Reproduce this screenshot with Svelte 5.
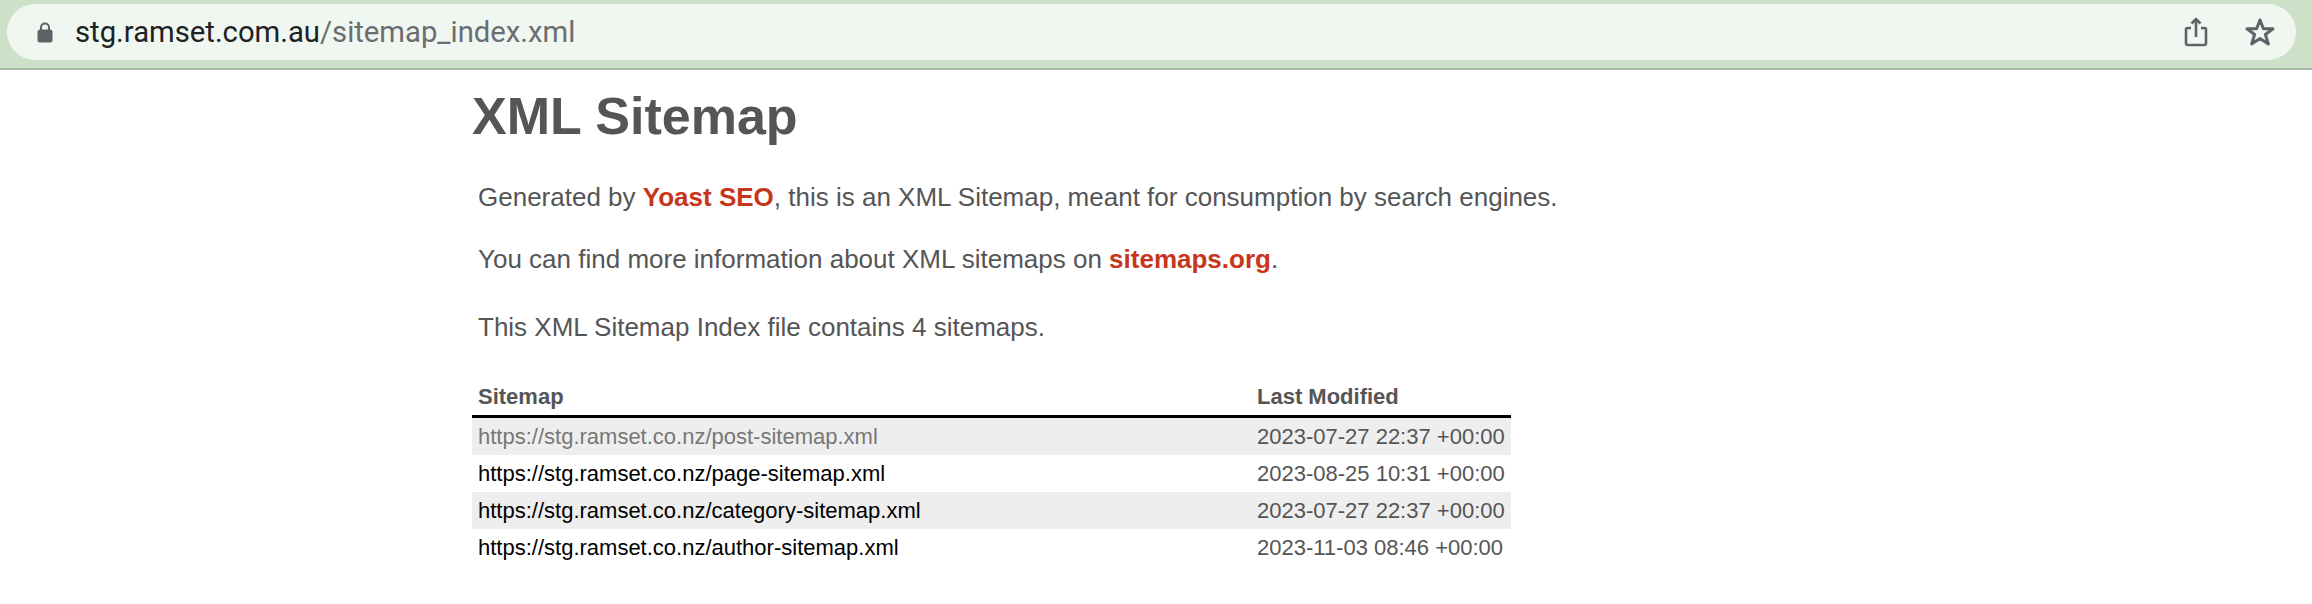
<script lang="ts">
  const rows = [
    { url: "https://stg.ramset.co.nz/post-sitemap.xml", date: "2023-07-27 22:37 +00:00", visited: true },
    { url: "https://stg.ramset.co.nz/page-sitemap.xml", date: "2023-08-25 10:31 +00:00", visited: false },
    { url: "https://stg.ramset.co.nz/category-sitemap.xml", date: "2023-07-27 22:37 +00:00", visited: false },
    { url: "https://stg.ramset.co.nz/author-sitemap.xml", date: "2023-11-03 08:46 +00:00", visited: false }
  ];
</script>

<div class="toolbar">
  <div class="pill">
    <svg class="lock" width="16" height="24" viewBox="0 0 16 24" aria-hidden="true">
      <path d="M4 10V7.5a4 4 0 0 1 8 0V10" fill="none" stroke="#5f6368" stroke-width="2" />
      <rect x="0.5" y="9.5" width="15" height="13" rx="2.5" fill="#5f6368" />
    </svg>
    <div class="url"><span class="host">stg.ramset.com.au</span>/sitemap_index.xml</div>
    <svg class="share" width="24" height="30" viewBox="0 0 24 30" aria-hidden="true">
      <path d="M7 11H3.5A1.5 1.5 0 0 0 2 12.500V26.500A1.500 1.500 0 0 0 3.500 28H20.500A1.500 1.500 0 0 0 22 26.500V12.500A1.500 1.500 0 0 0 20.500 11H17M12 20V2.500M7.500 6.500L12 2L16.500 6.500" fill="none" stroke="#5f6368" stroke-width="2.600" />
    </svg>
    <svg class="star" width="30" height="30" viewBox="0 0 30 30" aria-hidden="true">
      <path d="M15 3L18.400 11.700H28L20.400 17.500L23.300 27L15 21.500L6.700 27L9.600 17.500L2 11.700H11.600Z" fill="none" stroke="#5f6368" stroke-width="3" stroke-linejoin="round" />
    </svg>
  </div>
</div>

<main class="content">
  <h1>XML Sitemap</h1>
  <p class="intro">Generated by <a href="#yoast">Yoast SEO</a>, this is an XML Sitemap, meant for consumption by search engines.</p>
  <p class="intro more">You can find more information about XML sitemaps on <a href="#sitemaps">sitemaps.org</a>.</p>
  <p class="count">This XML Sitemap Index file contains 4 sitemaps.</p>
  <table>
    <thead>
      <tr><th class="col-url">Sitemap</th><th>Last Modified</th></tr>
    </thead>
    <tbody>
      {#each rows as row}
        <tr>
          <td class="col-url"><span class:visited={row.visited}>{row.url}</span></td>
          <td class="date">{row.date}</td>
        </tr>
      {/each}
    </tbody>
  </table>
</main>

<style>
  :global(body) {
    margin: 0;
    background: #fff;
  }
  .toolbar {
    height: 64px;
    background: #cde1c9;
    border-bottom: 2px solid #a9bda6;
    padding: 4px 7px 0;
    box-sizing: content-box;
  }
  .pill {
    height: 56px;
    width: 2289px;
    border-radius: 28px;
    background: #f0f6f0;
    display: flex;
    align-items: center;
    padding: 0 0 0 30px;
    box-sizing: border-box;
  }
  .lock {
    flex: none;
    margin-right: 22px;
  }
  .url {
    flex: 1;
    font-family: Roboto, sans-serif;
    font-size: 29.25px;
    color: #6b6d70;
  }
  .host {
    color: #202124;
  }
  .share {
    flex: none;
    margin-right: 37px;
  }
  .star {
    flex: none;
    margin-right: 21px;
  }
  .content {
    padding-left: 472px;
    width: 1040px;
    font-family: "Liberation Sans", Arial, sans-serif;
    color: #555;
  }
  h1 {
    margin: 0;
    padding-top: 16px;
    font-size: 52px;
    line-height: 60px;
    font-weight: 700;
    color: #555;
  }
  p {
    margin: 0;
    padding-left: 6px;
    font-size: 26px;
    line-height: 30px;
    white-space: nowrap;
  }
  .intro {
    margin-top: 36px;
  }
  .more {
    margin-top: 32px;
  }
  .count {
    margin-top: 38px;
  }
  a {
    color: #c7361b;
    font-weight: 700;
    text-decoration: none;
  }
  table {
    margin-top: 42px;
    width: 1039px;
    border-collapse: collapse;
    font-size: 22px;
  }
  th {
    text-align: left;
    padding: 0 0 5px 6px;
    line-height: 26px;
    color: #555;
    border-bottom: 3px solid #000;
  }
  td {
    height: 37px;
    padding: 0 0 0 6px;
    color: #555;
  }
  .col-url {
    width: 779px;
    box-sizing: border-box;
  }
  td.col-url {
    color: #000;
    padding-left: 6px;
  }
  .visited {
    color: #777;
  }
  tbody tr:nth-child(odd) {
    background: #eee;
  }
</style>
